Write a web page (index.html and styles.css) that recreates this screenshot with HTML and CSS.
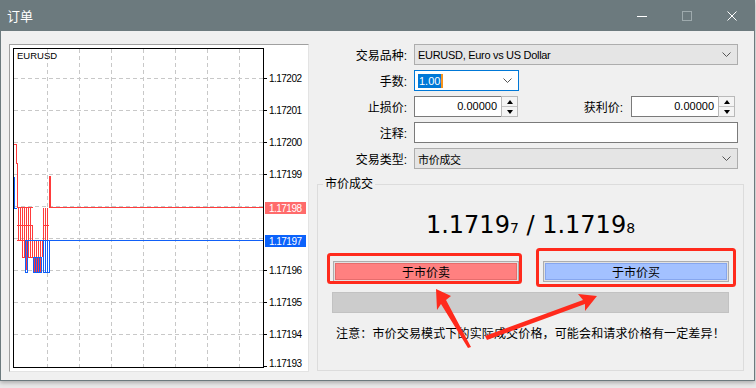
FILE: index.html
```html
<!DOCTYPE html>
<html lang="zh-CN">
<head>
    <meta charset="UTF-8">
    <title>订单</title>
    <link rel="stylesheet" href="styles.css">
</head>
<body>
    <div class="window">
        <div class="titlebar">
            <span class="title">订单</span>
            <div class="controls">
                <svg width="10" height="10" viewBox="0 0 10 10"><path d="M0 5.5H10" stroke="#fff"/></svg>
                <svg width="10" height="10" viewBox="0 0 10 10"><rect x="0.5" y="0.5" width="9" height="9" fill="none" stroke="#9eaaad"/></svg>
                <svg width="10" height="10" viewBox="0 0 10 10"><path d="M0.5 0.5L9.5 9.5M9.5 0.5L0.5 9.5" stroke="#fff"/></svg>
            </div>
        </div>

        <div class="content">
            <div class="chart-frame">
                <svg class="chart" width="298" height="326" viewBox="10 45 298 326">
                    <g stroke="#c8c8c8" stroke-dasharray="4 3" fill="none">
                        <path d="M14 78.5H263M14 110.5H263M14 142.5H263M14 174.5H263M14 206.5H263M14 238.5H263M14 270.5H263M14 302.5H263M14 334.5H263"/>
                        <path d="M47.5 49V367M79.5 49V367M111.5 49V367M143.5 49V367M175.5 49V367M207.5 49V367M239.5 49V367"/>
                    </g>
                    <g stroke="#000" fill="none">
                        <rect x="13.5" y="48.5" width="250" height="319"/>
                        <path d="M264 78.5H267M264 110.5H267M264 142.5H267M264 174.5H267M264 270.5H267M264 302.5H267M264 334.5H267M264 366.5H267"/>
                    </g>
                    <path class="ask" d="M14 144.5H16.5V163.5H17.5V208
                        M17 207.5H33M17 225.5H33M17 240.5H33
                        M18.5 208V240M20.5 208V240M22.5 208V257M24.5 208V257M26.5 208V270M28.5 208V257M30.5 208V257M32.5 225V257
                        M22 257.5H33
                        M34.5 240V272M36.5 240V272M38.5 240V272M40.5 240V272M42.5 240V257
                        M43.5 208V257M45.5 208V240M47.5 208V240M43 225.5H49
                        M49.5 208V176.5H50.5V207"/>
                    <path class="ask" d="M50 207.5H263"/>
                    <path class="bid" d="M14.5 177V208.5H17
                        M25 240.5H49M25.5 240V273M27.5 240V273M25 272.5H28
                        M33 257.5H42M33.5 257V273M35.5 257V273M37.5 257V273M39.5 257V273M41.5 257V273M33 272.5H42
                        M43.5 240V273M45.5 240V273M47.5 240V273M43 272.5H49.5M49.5 273V241"/>
                    <path class="bid" d="M49 240.5H263"/>
                    <text x="17" y="59" class="symbol">EURUSD</text>
                    <g class="axis">
                        <text x="269" y="82" textLength="33">1.17202</text>
                        <text x="269" y="114" textLength="33">1.17201</text>
                        <text x="269" y="146" textLength="33">1.17200</text>
                        <text x="269" y="178" textLength="33">1.17199</text>
                        <text x="269" y="274" textLength="33">1.17196</text>
                        <text x="269" y="306" textLength="33">1.17195</text>
                        <text x="269" y="338" textLength="33">1.17194</text>
                        <text x="269" y="367" textLength="33">1.17193</text>
                    </g>
                    <rect x="265" y="202" width="41" height="12" fill="#ff6b6b"/>
                    <text x="269" y="211.5" textLength="33" class="axis tag">1.17198</text>
                    <rect x="265" y="235" width="41" height="12" fill="#0b62fb"/>
                    <text x="269" y="244.5" textLength="33" class="axis tag">1.17197</text>
                </svg>
            </div>

            <div class="order-panel">
                <div class="order-form">
                    <div class="row">
                        <label class="label">交易品种:</label>
                        <div class="combo">
                            <span class="combo-text">EURUSD, Euro vs US Dollar</span>
                            <svg class="chevron" width="9" height="5" viewBox="0 0 9 5"><path d="M0.5 0.5L4.5 4.5L8.5 0.5" fill="none" stroke="#555"/></svg>
                        </div>
                    </div>
                    <div class="row">
                        <label class="label">手数:</label>
                        <div class="combo editable lots">
                            <span class="combo-text"><span class="selected">1.00</span><span class="caret"></span></span>
                            <svg class="chevron" width="9" height="5" viewBox="0 0 9 5"><path d="M0.5 0.5L4.5 4.5L8.5 0.5" fill="none" stroke="#555"/></svg>
                        </div>
                    </div>
                    <div class="row">
                        <label class="label">止损价:</label>
                        <div class="spinner">
                            <span class="spin-value">0.00000</span>
                            <span class="spin-buttons"><span class="spin-up"></span><span class="spin-down"></span></span>
                        </div>
                        <label class="label-inline">获利价:</label>
                        <div class="spinner">
                            <span class="spin-value">0.00000</span>
                            <span class="spin-buttons"><span class="spin-up"></span><span class="spin-down"></span></span>
                        </div>
                    </div>
                    <div class="row">
                        <label class="label">注释:</label>
                        <div class="text-input"></div>
                    </div>
                    <div class="row">
                        <label class="label">交易类型:</label>
                        <div class="combo">
                            <span class="combo-text">市价成交</span>
                            <svg class="chevron" width="9" height="5" viewBox="0 0 9 5"><path d="M0.5 0.5L4.5 4.5L8.5 0.5" fill="none" stroke="#555"/></svg>
                        </div>
                    </div>
                </div>

                <fieldset class="market">
                    <legend>市价成交</legend>
                    <div class="quote">1.1719<span class="pip">7</span> / 1.1719<span class="pip">8</span></div>
                    <div class="trade-buttons">
                        <button class="trade sell"><span>于市价卖</span></button>
                        <button class="trade buy"><span>于市价买</span></button>
                    </div>
                    <div class="progress"></div>
                    <p class="notice">注意：市价交易模式下的实际成交价格，可能会和请求价格有一定差异！</p>
                </fieldset>
            </div>
        </div>
    </div>

    <!-- red annotations drawn over the dialog -->
    <svg class="annotations" width="756" height="388" viewBox="0 0 756 388">
        <g fill="none" stroke="#ff2a1c" stroke-width="3">
            <rect x="328.5" y="254.5" width="192" height="28" rx="2"/>
            <rect x="537.5" y="249.5" width="197" height="36" rx="2"/>
        </g>
        <g fill="#ff2a1c">
            <polygon points="436,289 451,296 446,300 471,347 468,348 441,304 437,310"/>
            <polygon points="597,296 578,294 583,300 485,336 487,340 585,304 585,311"/>
        </g>
    </svg>
</body>
</html>
```

FILE: styles.css
```css
* {
    box-sizing: border-box;
}

body {
    margin: 0;
    width: 756px;
    height: 388px;
    overflow: hidden;
    position: relative;
    background: #e9e9e9;
    font-family: "Liberation Sans", "Noto Sans CJK SC", sans-serif;
    font-size: 12px;
    color: #000;
}

.window {
    width: 755px;
    height: 381px;
    background: #f0f0f0;
    border: 1px solid #6c7a7e;
    border-top: none;
    box-shadow: 0 2px 4px rgba(0, 0, 0, 0.25);
    display: flex;
    flex-direction: column;
}

.titlebar {
    height: 31px;
    flex-shrink: 0;
    background: #6c7a7e; /* dark slate */
    display: flex;
    align-items: center;
    padding-left: 6px;
    color: #fff;
}

.title {
    font-family: "Noto Sans CJK SC", sans-serif;
    font-size: 13px;
    line-height: 16px;
}

.controls {
    margin-left: auto;
    margin-right: 17px;
    display: flex;
    gap: 35px;
}

.controls svg {
    display: block;
}

.content {
    display: flex;
    gap: 8px;
    padding: 13px 0 0 8px;
}

/* chart */
.chart-frame {
    width: 300px;
    height: 328px;
    background: #fff;
    border: 1px solid;
    border-color: #a0a0a0 #e3e3e3 #e3e3e3 #a0a0a0;
}

.chart {
    display: block;
}

.ask,
.bid {
    fill: none;
    shape-rendering: crispEdges;
}

.ask {
    stroke: #ff3b3b; /* ask line red */
}

.bid {
    stroke: #1160f7; /* bid line blue */
}

.symbol {
    font-family: "Liberation Sans", sans-serif;
    font-size: 9.5px;
}

.axis {
    font-family: "Liberation Sans", sans-serif;
    font-size: 10px;
}

.tag {
    fill: #fff;
}

/* order form */
.order-panel {
    width: 427px;
}

.order-form {
    display: flex;
    flex-direction: column;
    gap: 5px;
    padding-right: 6px;
}

.row {
    display: flex;
    align-items: center;
    height: 21px;
}

.label {
    width: 90px;
    margin-right: 7px;
    text-align: right;
}

.label-inline {
    margin-left: auto;
    margin-right: 8px;
}

.combo {
    flex: 1;
    height: 21px;
    display: flex;
    align-items: center;
    justify-content: space-between;
    padding: 0 6px 0 3px;
    background: #e5e5e5;
    border: 1px solid #adadad;
}

.combo-text {
    font-size: 11px;
    letter-spacing: -0.3px;
    display: flex;
    align-items: center;
}

.combo.editable {
    background: #fff;
    border-color: #0078d7; /* focus blue */
}

.lots {
    flex: none;
    width: 105px;
}

.lots .combo-text {
    letter-spacing: 0;
}

.selected {
    background: #0078d7;
    color: #fff;
    line-height: 14px;
    padding: 0 1px;
}

.caret {
    width: 2px;
    height: 14px;
    background: #f7941d;
}

.spinner {
    width: 104px;
    height: 21px;
    display: flex;
}

.row .spinner:last-child {
    margin-right: 3px;
}

.spin-value {
    flex: 1;
    background: #fff;
    border: 1px solid #7a7a7a;
    border-right: none;
    text-align: right;
    padding-right: 4px;
    font-size: 11px;
    line-height: 19px;
}

.spin-buttons {
    width: 17px;
    display: flex;
    flex-direction: column;
    border: 1px solid #b9b9b9;
    background: #f4f4f4;
}

.spin-up,
.spin-down {
    flex: 1;
    display: flex;
    align-items: center;
    justify-content: center;
}

.spin-up {
    border-bottom: 1px solid #c4c4c4;
}

.spin-up::before,
.spin-down::before {
    content: "";
    border-left: 3.5px solid transparent;
    border-right: 3.5px solid transparent;
}

.spin-up::before {
    border-bottom: 4px solid #000;
}

.spin-down::before {
    border-top: 4px solid #000;
}

.text-input {
    flex: 1;
    height: 21px;
    background: #fff;
    border: 1px solid #7a7a7a;
}

/* market execution group */
.market {
    margin: 8px 0 0;
    padding: 0;
    height: 194px;
    min-width: 0;
    border: 1px solid #dcdcdc;
}

.market legend {
    margin-left: 5px;
    padding: 0 2px;
    line-height: 14px;
}

.quote {
    margin-top: 19px;
    text-align: center;
    font-family: "DejaVu Sans", sans-serif;
    font-size: 24px;
    line-height: 30px;
}

.pip {
    font-size: 14px;
}

.trade-buttons {
    display: flex;
    gap: 24px;
    margin-top: 18px;
    padding: 0 14px 0 15px;
}

.trade {
    flex: 1;
    height: 21px;
    padding: 1px;
    border: 1px solid #adadad;
    background: #e1e1e1;
    font-family: "Noto Sans CJK SC", sans-serif;
    font-size: 12px;
    color: #000;
}

.trade span {
    display: block;
    height: 17px;
    line-height: 15px;
}

.sell span {
    background: #ff8080;
    border: 1px solid #e66c6c;
}

.buy span {
    background: #a3c1ff;
    border: 1px solid #86a6ee;
}

.progress {
    height: 21px;
    margin: 10px 14px 0 14px;
    background: #cccccc;
    border: 1px solid #c2c2c2;
}

.notice {
    margin: 12px 0 0 18px;
    line-height: 16px;
    letter-spacing: 0.15px;
    font-family: "Noto Sans CJK SC", sans-serif;
}

.annotations {
    position: absolute;
    left: 0;
    top: 0;
    pointer-events: none;
}
```
